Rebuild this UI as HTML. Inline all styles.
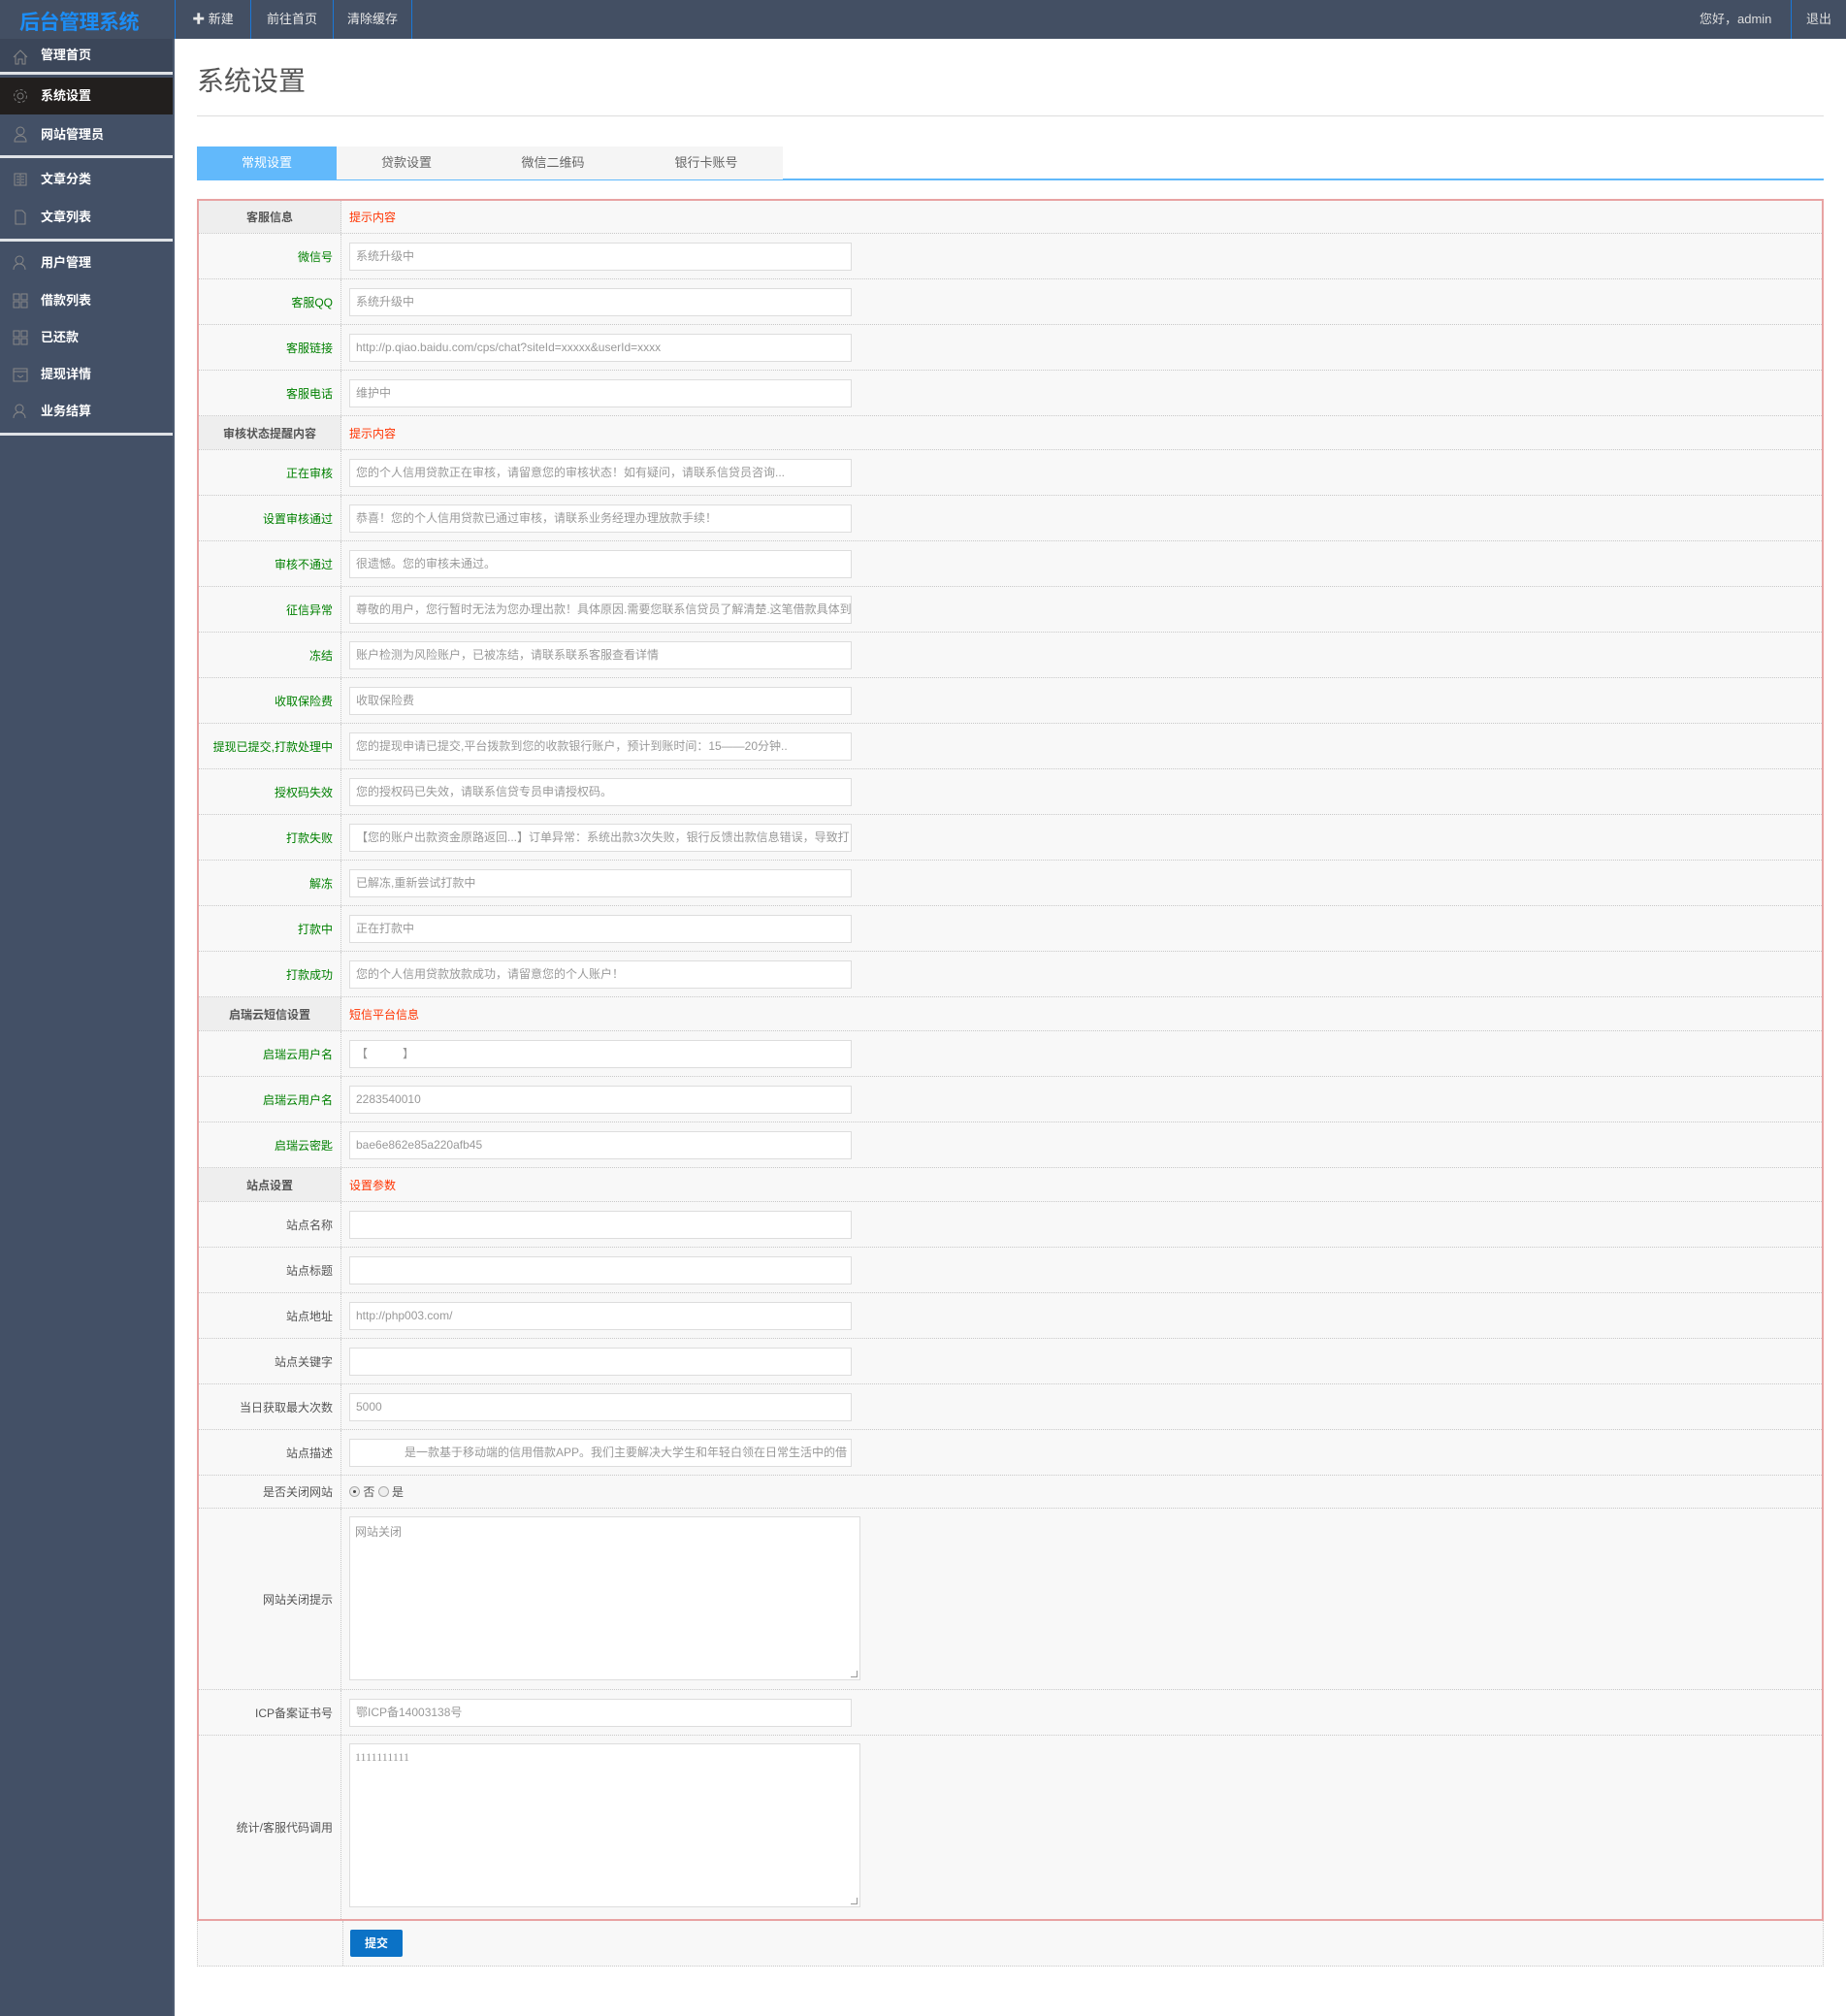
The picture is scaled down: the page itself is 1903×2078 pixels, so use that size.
<!DOCTYPE html>
<html><head><meta charset="utf-8"><style>
*{box-sizing:border-box;margin:0;padding:0}
body{width:1903px;height:2078px;position:relative;background:#fff;font-family:"Liberation Sans","Noto Sans CJK SC",sans-serif;font-size:12px;color:#555;overflow:hidden}
#top{position:absolute;left:0;top:0;width:1903px;height:40px;background:#434f63}
#logo{position:absolute;left:20px;top:7px;font-size:21px;font-weight:bold;color:#1c8df5;letter-spacing:-0.5px}
.nav{position:absolute;top:0;height:40px;line-height:40px;color:#e8e8e8;font-size:13px;border-left:1px solid #1a78d8;text-align:center}
#side{position:absolute;left:0;top:40px;width:180px;height:2038px;background:#435066;border-right:2px solid #4d5a70}
.si{position:absolute;left:0;width:178px;height:38px;line-height:38px;color:#fff;font-weight:bold;font-size:13px;padding-left:42px}
.si svg{position:absolute;left:13px;top:11px}
.sl{position:absolute;left:0;width:178px;height:3px;background:#dfe2e6}
#title{position:absolute;left:203px;top:62px;font-size:28px;color:#555}
#hr{position:absolute;left:203px;top:119px;width:1677px;height:1px;background:#ddd}
#tabs{position:absolute;left:203px;top:151px;height:35px;width:1677px;border-bottom:2px solid #62b9fb}
.tab{position:absolute;top:0;height:34px;line-height:34px;text-align:center;background:#f5f5f5;color:#666;font-size:13px}
#form{position:absolute;left:203px;top:205px;width:1677px;height:1775px;border:2px solid #e8a3a3;background:#f8f8f8}
.r{position:relative;display:flex;border-bottom:1px dotted #c8c8c8}
.l{width:147px;flex:none;text-align:right;padding-right:8px;border-right:1px dotted #c8c8c8;display:flex;align-items:center;justify-content:flex-end;color:#008000}
.g .l{color:#555}
.sec .l{background:#eee;justify-content:center;padding:0;color:#555;font-weight:bold}
.c{flex:1;display:flex;align-items:center;padding-left:8px}
.red{color:#ff3300}
.in{width:518px;height:29px;border:1px solid #ddd;background:#fff;color:#999;padding:0 6px;line-height:27px;white-space:nowrap;overflow:hidden}
.ta{width:527px;height:169px;border:1px solid #ddd;background:#fff;color:#999;padding:6px 5px;align-self:flex-start;margin-top:8px;position:relative}
.ta:after{content:"";position:absolute;right:2px;bottom:2px;width:6px;height:6px;border-right:1px solid #999;border-bottom:1px solid #999}
#sub{position:absolute;left:203px;top:1980px;width:1677px;height:47px;border:1px dotted #c8c8c8;border-top:none;background:#f8f8f8}
#btn{position:absolute;left:157px;top:9px;width:54px;height:28px;background:#0b72c6;color:#fff;font-weight:bold;text-align:center;line-height:28px;border-radius:2px;font-size:12px}
.rad{display:inline-block;width:11px;height:11px;border-radius:50%;border:1px solid #aaa;background:#eee;vertical-align:middle;position:relative}
</style></head><body>
<div id="top">
<div id="logo">后台管理系统</div>
<div class="nav" style="left:180px;width:78px">✚ 新建</div>
<div class="nav" style="left:258px;width:85px">前往首页</div>
<div class="nav" style="left:343px;width:82px;border-right:1px solid #1a78d8">清除缓存</div>
<div class="nav" style="left:1752px;border:none;color:#ddd">您好，admin</div>
<div class="nav" style="left:1846px;width:57px;color:#ddd">退出</div>
</div>
<div id="side">
<div class="si" style="top:0;height:34px;line-height:34px;background:#3b4659"><svg width="16" height="16" viewBox="0 0 16 16" fill="none" stroke="#888"><path d="M1 8L8 1l7 7M3 6v9h3v-5h4v5h3V6"/></svg>管理首页</div>
<div class="sl" style="top:34px"></div>
<div class="si" style="top:40px;background:#221f1e"><svg width="16" height="16" viewBox="0 0 16 16" fill="none" stroke="#777"><circle cx="8" cy="8" r="3"/><circle cx="8" cy="8" r="6.5" stroke-dasharray="3 2"/></svg>系统设置</div>
<div class="si" style="top:78px;height:42px;line-height:42px"><svg width="16" height="18" viewBox="0 0 16 18" fill="none" stroke="#888"><circle cx="8" cy="6" r="4"/><path d="M2 17c0-4 3-6 6-6s6 2 6 6z"/></svg>网站管理员</div>
<div class="sl" style="top:120px"></div>
<div class="si" style="top:126px"><svg width="16" height="16" viewBox="0 0 16 16" fill="none" stroke="#888"><path d="M2 2h12v12H2zM8 2v12M4 5h3M4 8h3M4 11h3M9 5h3M9 8h3M9 11h3"/></svg>文章分类</div>
<div class="si" style="top:165px"><svg width="16" height="16" viewBox="0 0 16 16" fill="none" stroke="#888"><path d="M3 1h7l3 3v11H3z"/></svg>文章列表</div>
<div class="sl" style="top:206px"></div>
<div class="si" style="top:212px"><svg width="16" height="16" viewBox="0 0 16 16" fill="none" stroke="#888"><circle cx="7" cy="5" r="4"/><path d="M1 15c0-4 3-6 6-6s6 2 6 6"/></svg>用户管理</div>
<div class="si" style="top:251px"><svg width="16" height="16" viewBox="0 0 16 16" fill="none" stroke="#888"><path d="M1 1h6v6H1zM9 1h6v6H9zM1 9h6v6H1zM9 9h6v6H9z"/></svg>借款列表</div>
<div class="si" style="top:289px"><svg width="16" height="16" viewBox="0 0 16 16" fill="none" stroke="#888"><path d="M1 1h6v6H1zM9 1h6v6H9zM1 9h6v6H1zM9 9h6v6H9z"/></svg>已还款</div>
<div class="si" style="top:327px"><svg width="16" height="16" viewBox="0 0 16 16" fill="none" stroke="#888"><path d="M1 2h14v13H1zM1 5h14M5 9l3 2 3-2"/></svg>提现详情</div>
<div class="si" style="top:365px"><svg width="16" height="16" viewBox="0 0 16 16" fill="none" stroke="#888"><circle cx="7" cy="5" r="4"/><path d="M1 15c0-4 3-6 6-6s6 2 6 6"/></svg>业务结算</div>
<div class="sl" style="top:406px"></div>
</div>
<div id="title">系统设置</div>
<div id="hr"></div>
<div id="tabs">
<div class="tab" style="left:0;width:144px;background:#62b9fb;color:#fff">常规设置</div>
<div class="tab" style="left:144px;width:144px">贷款设置</div>
<div class="tab" style="left:288px;width:158px">微信二维码</div>
<div class="tab" style="left:446px;width:158px">银行卡账号</div>
</div>
<div id="form">
<div class="r sec" style="height:34px"><div class="l">客服信息</div><div class="c red">提示内容</div></div>
<div class="r" style="height:47px"><div class="l">微信号</div><div class="c"><div class="in">系统升级中</div></div></div>
<div class="r" style="height:47px"><div class="l">客服QQ</div><div class="c"><div class="in">系统升级中</div></div></div>
<div class="r" style="height:47px"><div class="l">客服链接</div><div class="c"><div class="in">http://p.qiao.baidu.com/cps/chat?siteId=xxxxx&amp;userId=xxxx</div></div></div>
<div class="r" style="height:47px"><div class="l">客服电话</div><div class="c"><div class="in">维护中</div></div></div>
<div class="r sec" style="height:35px"><div class="l">审核状态提醒内容</div><div class="c red">提示内容</div></div>
<div class="r" style="height:47px"><div class="l">正在审核</div><div class="c"><div class="in">您的个人信用贷款正在审核，请留意您的审核状态！如有疑问，请联系信贷员咨询...</div></div></div>
<div class="r" style="height:47px"><div class="l">设置审核通过</div><div class="c"><div class="in">恭喜！您的个人信用贷款已通过审核，请联系业务经理办理放款手续！</div></div></div>
<div class="r" style="height:47px"><div class="l">审核不通过</div><div class="c"><div class="in">很遗憾。您的审核未通过。</div></div></div>
<div class="r" style="height:47px"><div class="l">征信异常</div><div class="c"><div class="in">尊敬的用户，您行暂时无法为您办理出款！具体原因.需要您联系信贷员了解清楚.这笔借款具体到</div></div></div>
<div class="r" style="height:47px"><div class="l">冻结</div><div class="c"><div class="in">账户检测为风险账户，已被冻结，请联系联系客服查看详情</div></div></div>
<div class="r" style="height:47px"><div class="l">收取保险费</div><div class="c"><div class="in">收取保险费</div></div></div>
<div class="r" style="height:47px"><div class="l">提现已提交,打款处理中</div><div class="c"><div class="in">您的提现申请已提交,平台拨款到您的收款银行账户，预计到账时间：15——20分钟..</div></div></div>
<div class="r" style="height:47px"><div class="l">授权码失效</div><div class="c"><div class="in">您的授权码已失效，请联系信贷专员申请授权码。</div></div></div>
<div class="r" style="height:47px"><div class="l">打款失败</div><div class="c"><div class="in">【您的账户出款资金原路返回...】订单异常：系统出款3次失败，银行反馈出款信息错误，导致打</div></div></div>
<div class="r" style="height:47px"><div class="l">解冻</div><div class="c"><div class="in">已解冻,重新尝试打款中</div></div></div>
<div class="r" style="height:47px"><div class="l">打款中</div><div class="c"><div class="in">正在打款中</div></div></div>
<div class="r" style="height:47px"><div class="l">打款成功</div><div class="c"><div class="in">您的个人信用贷款放款成功，请留意您的个人账户！</div></div></div>
<div class="r sec" style="height:35px"><div class="l">启瑞云短信设置</div><div class="c red">短信平台信息</div></div>
<div class="r" style="height:47px"><div class="l">启瑞云用户名</div><div class="c"><div class="in">【　　　】</div></div></div>
<div class="r" style="height:47px"><div class="l">启瑞云用户名</div><div class="c"><div class="in">2283540010</div></div></div>
<div class="r" style="height:47px"><div class="l">启瑞云密匙</div><div class="c"><div class="in">bae6e862e85a220afb45</div></div></div>
<div class="r sec" style="height:35px"><div class="l">站点设置</div><div class="c red">设置参数</div></div>
<div class="r g" style="height:47px"><div class="l">站点名称</div><div class="c"><div class="in"></div></div></div>
<div class="r g" style="height:47px"><div class="l">站点标题</div><div class="c"><div class="in"></div></div></div>
<div class="r g" style="height:47px"><div class="l">站点地址</div><div class="c"><div class="in">http://php003.com/</div></div></div>
<div class="r g" style="height:47px"><div class="l">站点关键字</div><div class="c"><div class="in"></div></div></div>
<div class="r g" style="height:47px"><div class="l">当日获取最大次数</div><div class="c"><div class="in">5000</div></div></div>
<div class="r g" style="height:47px"><div class="l">站点描述</div><div class="c"><div class="in"><span style="padding-left:50px"></span>是一款基于移动端的信用借款APP。我们主要解决大学生和年轻白领在日常生活中的借</div></div></div>
<div class="r g" style="height:34px"><div class="l">是否关闭网站</div><div class="c"><span class="rad"><span style="position:absolute;left:3px;top:3px;width:3px;height:3px;border-radius:50%;background:#444"></span></span>&nbsp;否&nbsp;<span class="rad"></span>&nbsp;是</div></div>
<div class="r g" style="height:187px"><div class="l">网站关闭提示</div><div class="c"><div class="ta">网站关闭</div></div></div>
<div class="r g" style="height:47px"><div class="l">ICP备案证书号</div><div class="c"><div class="in">鄂ICP备14003138号</div></div></div>
<div class="r g" style="height:189px;border-bottom:none"><div class="l">统计/客服代码调用</div><div class="c"><div class="ta" style="font-family:'Liberation Serif',serif">1111111111</div></div></div>
</div>
<div id="sub"><div style="position:absolute;left:149px;top:0;height:46px;border-left:1px dotted #c8c8c8"></div><div id="btn">提交</div></div>
</body></html>
